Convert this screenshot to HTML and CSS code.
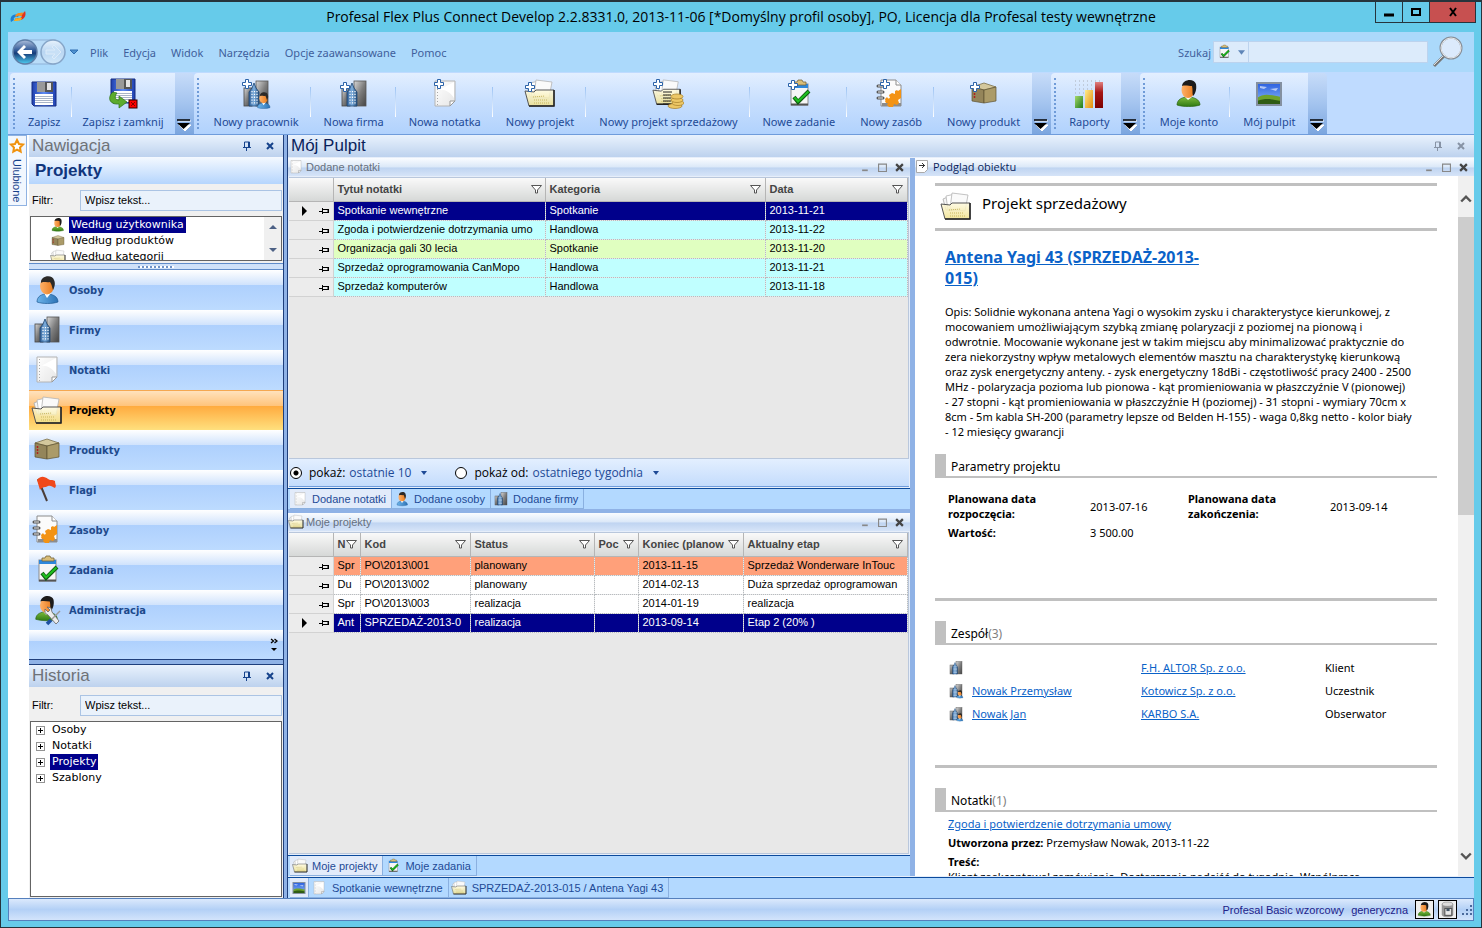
FILE: index.html
```html
<!DOCTYPE html>
<html lang="pl">
<head>
    <meta charset="UTF-8">
    <meta name="viewport" content="width=device-width, initial-scale=1.0">
    <title>Profesal Flex Plus Connect</title>
    <link rel="stylesheet" href="styles.css">
</head>
<body>
    <!-- Icons -->
    <svg class="sprite" width="0" height="0" aria-hidden="true">
        <defs>
            <linearGradient id="g-steel" x1="0" y1="0" x2="1" y2="1"><stop offset="0" stop-color="#d8d8d8"/><stop offset="0.5" stop-color="#7d7d7d"/><stop offset="1" stop-color="#444"/></linearGradient>
            <linearGradient id="g-tower" x1="0" y1="0" x2="1" y2="0"><stop offset="0" stop-color="#2f5f96"/><stop offset="0.5" stop-color="#7fb0e0"/><stop offset="1" stop-color="#24507f"/></linearGradient>
            <linearGradient id="g-paper" x1="0" y1="0" x2="1" y2="1"><stop offset="0" stop-color="#fff"/><stop offset="1" stop-color="#e6e6e6"/></linearGradient>
            <linearGradient id="g-folder" x1="0" y1="0" x2="0" y2="1"><stop offset="0" stop-color="#fffbe0"/><stop offset="1" stop-color="#efe08a"/></linearGradient>
            <linearGradient id="g-disk" x1="0" y1="0" x2="1" y2="0"><stop offset="0" stop-color="#1f3fae"/><stop offset="0.5" stop-color="#5f8cf4"/><stop offset="1" stop-color="#1f3fae"/></linearGradient>
            <linearGradient id="g-skin" x1="0" y1="0" x2="1" y2="0"><stop offset="0" stop-color="#ffb168"/><stop offset="1" stop-color="#e87a1c"/></linearGradient>
            <linearGradient id="g-green" x1="0" y1="0" x2="0" y2="1"><stop offset="0" stop-color="#7dbb3c"/><stop offset="1" stop-color="#2f7a14"/></linearGradient>
            <linearGradient id="g-blue" x1="0" y1="0" x2="1" y2="0"><stop offset="0" stop-color="#6db4ea"/><stop offset="1" stop-color="#2c73b6"/></linearGradient>
            <linearGradient id="g-orb" x1="0" y1="0" x2="0" y2="1"><stop offset="0" stop-color="#aebfdc"/><stop offset="0.45" stop-color="#2b5594"/><stop offset="0.55" stop-color="#163c79"/><stop offset="1" stop-color="#4fd0f4"/></linearGradient>
            <linearGradient id="g-orb-off" x1="0" y1="0" x2="0" y2="1"><stop offset="0" stop-color="#e8f2fc"/><stop offset="0.5" stop-color="#b9d6f2"/><stop offset="1" stop-color="#d3e9fa"/></linearGradient>
            <linearGradient id="g-sky" x1="0" y1="0" x2="0" y2="1"><stop offset="0" stop-color="#2a5fe0"/><stop offset="1" stop-color="#8fbcf6"/></linearGradient>
            <linearGradient id="g-bar1" x1="0" y1="0" x2="1" y2="1"><stop offset="0" stop-color="#a5d86a"/><stop offset="1" stop-color="#1d7a1d"/></linearGradient>
            <linearGradient id="g-bar2" x1="0" y1="0" x2="1" y2="1"><stop offset="0" stop-color="#ffec8c"/><stop offset="1" stop-color="#e38c0c"/></linearGradient>
            <linearGradient id="g-bar3" x1="0" y1="0" x2="0" y2="1"><stop offset="0" stop-color="#e08080"/><stop offset="0.4" stop-color="#a51616"/><stop offset="1" stop-color="#7c0000"/></linearGradient>
        </defs>
        <symbol id="i-logo" viewBox="0 0 16 12">
            <path d="M1 11C-1 5 4 2 9 4L8 6C5 5 3 7 4 9z" fill="#1d7fd4"/>
            <path d="M5 5C8 0 12 3 14 1L12 5C10 5 8 4 6 6z" fill="#f58a1f"/>
            <path d="M15 0C17 5 13 10 8 9L4 10L6 7C9 8 12 7 12 4z" fill="#e2321f"/>
            <path d="M4 10L6 7C8 8 10 7 11 6L12 8C10 10 7 10 4 10z" fill="#f7b021"/>
        </symbol>
        <symbol id="i-disk" viewBox="0 0 32 32">
            <path d="M4 4h24v24H6l-2-2z" fill="url(#g-disk)" stroke="#162c80"/>
            <rect x="9" y="4" width="16" height="10" fill="#555"/>
            <rect x="9" y="4" width="8" height="10" fill="#999"/>
            <rect x="19" y="5" width="4" height="7" fill="#e4e4e4"/>
            <rect x="7" y="16" width="18" height="11" fill="#fff"/>
            <path d="M7 18.500h18M7 20.500h18M7 22.500h18M7 24.500h18" stroke="#a8b4c8"/>
        </symbol>
        <symbol id="i-disk-exit" viewBox="0 0 32 32">
            <use href="#i-disk" x="0" y="-3" width="32" height="32"/>
            <path d="M6 14C0 19 2 27 12 26v4l8-6-8-6v4C8 22 7 19 10 15z" fill="#5cab2d" stroke="#2e7412" stroke-width="0.700"/>
            <rect x="22" y="22" width="8" height="8" fill="#f00" stroke="#300"/>
            <path d="M24 24l4 4M28 24l-4 4" stroke="#800"/>
        </symbol>
        <symbol id="i-firm" viewBox="0 0 32 32">
            <rect x="16" y="3" width="12" height="25" fill="url(#g-steel)" stroke="#555" stroke-width="0.800"/>
            <rect x="4" y="10" width="8" height="18" fill="url(#g-steel)" stroke="#444" stroke-width="0.800"/>
            <path d="M9 28V14l3-4 2-5 2 5 3 4v14z" fill="url(#g-tower)" stroke="#1e446e" stroke-width="0.800"/>
            <path d="M12 13v13M14.500 13v13M17 13v13" stroke="#fff" stroke-width="1.200" stroke-dasharray="1.300 1.500"/>
        </symbol>
        <symbol id="i-person" viewBox="0 0 32 32">
            <path d="M6 28c0-6 5-8 10-8s11 2 11 8c-6 2-15 2-21 0z" fill="url(#g-blue)" stroke="#1f5a94" stroke-width="0.700"/>
            <path d="M13 19l3 5 4-5z" fill="#fff"/>
            <ellipse cx="16" cy="12" rx="7" ry="8.500" fill="url(#g-skin)"/>
            <path d="M10 9C9 1 22 0 23 6c2 4 0 8-1 10-1-3-1-5-3-8-3 1-7-1-9 1z" fill="#2c2a28"/>
        </symbol>
        <symbol id="i-user" viewBox="0 0 32 32">
            <path d="M4 27c0-6 6-8 11-8s12 2 12 8c-6 2-17 2-23 0z" fill="url(#g-green)" stroke="#2b6412" stroke-width="0.700"/>
            <path d="M12 19l3 3 4-3z" fill="#fff"/>
            <ellipse cx="15" cy="12" rx="6.500" ry="8" fill="url(#g-skin)"/>
            <path d="M9 8C10 1 21 0 23 6c1 6-1 10-3 12-1-3 0-6-1-10-3 0-7-1-10 0z" fill="#1c1b1b"/>
        </symbol>
        <symbol id="i-firm-person" viewBox="0 0 32 32">
            <use href="#i-firm" width="32" height="32"/>
            <use href="#i-person" x="14" y="13" width="19" height="19"/>
        </symbol>
        <symbol id="i-note" viewBox="0 0 32 32">
            <path d="M6 3h20v20l-5 5H6z" fill="url(#g-paper)" stroke="#b4b4b4"/>
            <path d="M8.500 5v22" stroke="#aaa" stroke-dasharray="1 2"/>
            <path d="M10 12c6-1 11 2 15 8V4z" fill="#fff"/>
            <path d="M21 28v-5h5z" fill="#fff" stroke="#999"/>
        </symbol>
        <symbol id="i-folder" viewBox="0 0 32 32">
            <path d="M3 8l7-3 3 14H6z" fill="#f4f4f4" stroke="#aaa" stroke-width="0.800"/>
            <path d="M6 5l9-2 2 16H8z" fill="#fff" stroke="#b4b4b4" stroke-width="0.800"/>
            <path d="M12 2l16 2-3 16-15-2z" fill="#fafafa" stroke="#b4b4b4" stroke-width="0.800"/>
            <path d="M1 13l9 1 2-2h18v16H5z" fill="url(#g-folder)" fill-opacity="0.850" stroke="#555"/>
            <path d="M9 19l12-1M10 22h13M10 25h15" stroke="#c9b760" stroke-dasharray="1 1"/>
            <path d="M30 12v16H5" fill="none" stroke="#222" stroke-width="1.500"/>
        </symbol>
        <symbol id="i-folder-coins" viewBox="0 0 32 32">
            <use href="#i-folder" width="30" height="30"/>
            <path d="M11 14h9M11 17h8M11 20h8M11 23h8M11 26h8" stroke="#222"/>
            <g fill="#ecc766" stroke="#a57c28" stroke-width="0.700">
                <ellipse cx="23" cy="28" rx="7" ry="2.500"/><ellipse cx="26" cy="25" rx="6" ry="2.500"/><ellipse cx="25" cy="22" rx="6" ry="2.500"/><ellipse cx="25" cy="18.500" rx="6" ry="2.500"/>
            </g>
        </symbol>
        <symbol id="i-task" viewBox="0 0 32 32">
            <rect x="8" y="6" width="17" height="21" fill="#f6f6f6" stroke="#8c8c8c"/>
            <rect x="8" y="6" width="17" height="4" fill="#2d87dc"/>
            <path d="M11 7V4h3l1-2h4l1 2h3v3z" fill="#d8bd78" stroke="#77643a" stroke-width="0.800"/>
            <path d="M8 26.500h17" stroke="#555" stroke-width="2"/>
            <path d="M11 19l4 5L26 13" fill="none" stroke="#115c11" stroke-width="4"/>
            <path d="M11.500 19.500l3.500 4L25.500 13.500" fill="none" stroke="#1fc01f" stroke-width="2.200"/>
        </symbol>
        <symbol id="i-resource" viewBox="0 0 32 32">
            <path d="M6 2h15l5 5v21H6z" fill="#fbfbfb" stroke="#8c8c8c"/>
            <path d="M21 2v5h5" fill="#fff" stroke="#8c8c8c"/>
            <path d="M7 26.500h19" stroke="#8c8c8c" stroke-width="3"/>
            <path d="M26 11l-3 2-1-1-2 1v3l-3-1-3 2 1 3-3 1-2 3 3 1-1 2 2 2h4l1-3 3 1 2-2-1-3 3-2z" fill="#f39314"/>
            <path d="M10 21l2-2 2 3-1 3h-2z" fill="#f39314"/>
            <path d="M3 8h5M3 14h5M3 20h5" stroke="#555" stroke-width="3" stroke-linecap="round"/>
            <path d="M3 8h5M3 14h5M3 20h5" stroke="#eee" stroke-width="1.200"/>
        </symbol>
        <symbol id="i-box" viewBox="0 0 32 32">
            <path d="M4 9l12-4 12 4-12 3z" fill="#d3c79c" stroke="#6e6239" stroke-width="0.700"/>
            <path d="M4 9l12 3v13L4 23z" fill="#94855a" stroke="#5d5230" stroke-width="0.700"/>
            <path d="M28 9l-12 3v13l12-2z" fill="#ab9b69" stroke="#5d5230" stroke-width="0.700"/>
            <path d="M6.500 12v9" stroke="#b02020" stroke-width="1.500" stroke-dasharray="2 1"/>
        </symbol>
        <symbol id="i-flag" viewBox="0 0 32 32">
            <path d="M7 5l9 22" stroke="#4a3d38" stroke-width="2"/>
            <path d="M6 6c4-5 8-3 11-1s4 0 7 2c0 4 2 4 0 7-3-1-4-3-7-2-3 2-5 0-8 4z" fill="#f0481a"/>
        </symbol>
        <symbol id="i-admin" viewBox="0 0 32 32">
            <use href="#i-user" x="0" y="0" width="32" height="30"/>
            <path d="M16 13l4 1 1 4 7 9-3 3-8-9-3-2v-4l3 3 2-2z" fill="#ececec" stroke="#666" stroke-width="0.800"/>
            <path d="M29 17l-8 8" stroke="#999" stroke-width="1.500"/>
            <path d="M20 26l-4 4" stroke="#1d50a0" stroke-width="3.500"/>
        </symbol>
        <symbol id="i-chart" viewBox="0 0 32 32">
            <path d="M2 3h26M2 7h26M2 11h26M2 15h26" stroke="#a9aeb8" stroke-dasharray="1 3"/>
            <rect x="2" y="18" width="8" height="12" fill="url(#g-bar1)"/>
            <rect x="12" y="12" width="8" height="18" fill="url(#g-bar2)"/>
            <rect x="22" y="4" width="8" height="26" fill="url(#g-bar3)"/>
        </symbol>
        <symbol id="i-desktop" viewBox="0 0 32 32">
            <rect x="4" y="5" width="24" height="22" fill="url(#g-sky)"/>
            <path d="M7 8l7 1-3 2-4-1zM17 11l8-1-2 3z" fill="#fff" opacity="0.600"/>
            <path d="M4 20c7-5 13-3 24-1v8H4z" fill="#6fa32c"/>
            <path d="M4 23c9-3 14-2 24 0v4H4z" fill="#2f5c14"/>
            <rect x="4" y="5" width="24" height="22" fill="none" stroke="#8490a0" stroke-width="2"/>
        </symbol>
        <symbol id="i-plus" viewBox="0 0 10 10">
            <path d="M3.500.5h3v3h3v3h-3v3h-3v-3h-3v-3h3z" fill="#fff" stroke="#2b62a8"/>
        </symbol>
        <symbol id="i-lens" viewBox="0 0 32 32">
            <path d="M2 30l11-11" stroke="#777" stroke-width="3"/>
            <path d="M2 29l11-11" stroke="#ddd"/>
            <circle cx="19" cy="12" r="10.500" fill="#dceafc" stroke="#868e98" stroke-width="2"/>
            <circle cx="19" cy="12" r="10" fill="none" stroke="#e8e8e8"/>
        </symbol>
        <symbol id="i-star" viewBox="0 0 16 16">
            <path d="M8 2l2 4 4 .5-3 3 .7 4.200L8 11.700l-3.700 2L5 9.500l-3-3L6 6z" fill="#fff" stroke="#f0920e" stroke-width="2"/>
        </symbol>
        <symbol id="i-pin" viewBox="0 0 8 10">
            <path d="M1.500 1h5v5M5.500 1v5M1.500 1v5M0 6.500h8M3.500 6v4" fill="none" stroke="currentColor"/>
        </symbol>
        <symbol id="i-rowpin" viewBox="0 0 10 6">
            <path d="M0 3.500h4M3.500 0v6M4 1.500h5v3M4 4.500h6M9.500 1v4" fill="none" stroke="#000"/>
        </symbol>
        <symbol id="i-close" viewBox="0 0 8 8">
            <path d="M1 1l6 6M7 1L1 7" stroke="currentColor" stroke-width="2"/>
        </symbol>
        <symbol id="i-min" viewBox="0 0 8 8"><path d="M1 6.500h5" stroke="currentColor" stroke-width="1.500"/></symbol>
        <symbol id="i-max" viewBox="0 0 8 8"><path d="M0 1h8M.5 1v7M7.500 1v7M0 7.500h8" fill="none" stroke="currentColor"/></symbol>
        <symbol id="i-filter" viewBox="0 0 11 9">
            <path d="M.5.5h10L6.500 5v3h-2V5z" fill="#fff" stroke="#555"/>
        </symbol>
        <symbol id="i-overflow" viewBox="0 0 14 12">
            <path d="M1 2h13M2 6h12L8 12z" fill="#fff" stroke="#fff"/>
            <path d="M0 1h13" stroke="#000" stroke-width="1.500"/>
            <path d="M0 4h13l-6.500 6z"/>
        </symbol>
        <symbol id="i-db" viewBox="0 0 32 32">
            <path d="M6 6v20c0 5 20 5 20 0V6z" fill="#999" stroke="#777"/>
            <ellipse cx="16" cy="6" rx="10" ry="4" fill="#ddd" stroke="#777"/>
            <rect x="11" y="14" width="13" height="13" fill="#e8e8e8" stroke="#555" stroke-width="2"/>
            <rect x="14" y="14" width="6" height="5" fill="#456"/>
        </symbol>
    </svg>

    <div class="window">
        <header class="titlebar">
            <svg class="logo"><use href="#i-logo"/></svg>
            <h1>Profesal Flex Plus Connect Develop 2.2.8331.0, 2013-11-06 [*Domyślny profil osoby], PO, Licencja dla Profesal testy wewnętrzne</h1>
            <div class="window-buttons">
                <button type="button" aria-label="Minimalizuj"><svg viewBox="0 0 12 10"><path d="M1 8h10" stroke="#000" stroke-width="3"/></svg></button>
                <button type="button" aria-label="Maksymalizuj"><svg viewBox="0 0 12 10"><path d="M2 2h8v6H2z" fill="none" stroke="#000" stroke-width="2"/></svg></button>
                <button type="button" class="close" aria-label="Zamknij"><svg viewBox="0 0 12 10"><path d="M3 1l6 8M9 1L3 9" stroke="#000" stroke-width="2"/></svg></button>
            </div>
        </header>

        <div class="menubar">
            <svg class="history-orbs" viewBox="0 0 56 28">
                <rect x="12" y="2" width="32" height="24" fill="#b9dcf8" stroke="#8fb2d8"/>
                <circle cx="14" cy="14" r="12" fill="url(#g-orb)" stroke="#5f7fa8" stroke-width="1.500"/>
                <path d="M6 14l7-7 2 2-3 3h9v4h-9l3 3-2 2z" fill="#fff"/>
                <circle cx="42" cy="14" r="12" fill="url(#g-orb-off)" stroke="#86a5c8" stroke-width="1.500"/>
                <path d="M50 14l-7-7-2 2 3 3h-9v4h9l-3 3 2 2z" fill="#c8e0f6" stroke="#dcebf9"/>
            </svg>
            <svg class="history-arrow" viewBox="0 0 10 6"><path d="M1 1h8L5 5z" fill="#4f93cf" stroke="#2e6db0"/></svg>
            <nav class="menu">
                <a href="#">Plik</a>
                <a href="#">Edycja</a>
                <a href="#">Widok</a>
                <a href="#">Narzędzia</a>
                <a href="#">Opcje zaawansowane</a>
                <a href="#">Pomoc</a>
            </nav>
            <form class="search">
                <label for="search">Szukaj</label>
                <button type="button" class="search-type" aria-label="Rodzaj obiektu">
                    <svg class="icon16"><use href="#i-task"/></svg>
                    <svg class="search-arrow" viewBox="0 0 8 5"><path d="M0 0h8L4 5z" fill="#5f86b8"/></svg>
                </button>
                <input type="text" id="search">
                <button type="button" class="search-go" aria-label="Szukaj teraz"><svg><use href="#i-lens"/></svg></button>
            </form>
        </div>

        <div class="toolbar">
            <div class="tool-group">
                <button type="button"><svg class="icon32"><use href="#i-disk"/></svg>Zapisz</button>
                <button type="button"><svg class="icon32"><use href="#i-disk-exit"/></svg>Zapisz i zamknij</button>
            </div>
            <button type="button" class="overflow" aria-label="Więcej"><svg><use href="#i-overflow"/></svg></button>
            <div class="tool-group roomy">
                <button type="button"><svg class="icon32"><use href="#i-firm-person"/><use href="#i-plus" x="2" y="1" width="10" height="10"/></svg>Nowy pracownik</button>
                <button type="button"><svg class="icon32"><use href="#i-firm"/><use href="#i-plus" x="2" y="4" width="10" height="10"/></svg>Nowa firma</button>
                <button type="button"><svg class="icon32"><use href="#i-note"/><use href="#i-plus" x="5" y="1" width="10" height="10"/></svg>Nowa notatka</button>
                <button type="button"><svg class="icon32"><use href="#i-folder"/><use href="#i-plus" x="1" y="4" width="10" height="10"/></svg>Nowy projekt</button>
                <button type="button"><svg class="icon32"><use href="#i-folder-coins"/><use href="#i-plus" x="1" y="1" width="10" height="10"/></svg>Nowy projekt sprzedażowy</button>
                <button type="button"><svg class="icon32"><use href="#i-task"/><use href="#i-plus" x="5" y="2" width="10" height="10"/></svg>Nowe zadanie</button>
                <button type="button"><svg class="icon32"><use href="#i-resource"/><use href="#i-plus" x="5" y="1" width="10" height="10"/></svg>Nowy zasób</button>
                <button type="button"><svg class="icon32"><use href="#i-box"/><use href="#i-plus" x="2" y="4" width="10" height="10"/></svg>Nowy produkt</button>
            </div>
            <button type="button" class="overflow" aria-label="Więcej"><svg><use href="#i-overflow"/></svg></button>
            <div class="tool-group">
                <button type="button"><svg class="icon32"><use href="#i-chart"/></svg>Raporty</button>
            </div>
            <button type="button" class="overflow" aria-label="Więcej"><svg><use href="#i-overflow"/></svg></button>
            <div class="tool-group roomy">
                <button type="button"><svg class="icon32"><use href="#i-user"/></svg>Moje konto</button>
                <button type="button"><svg class="icon32"><use href="#i-desktop"/></svg>Mój pulpit</button>
            </div>
            <button type="button" class="overflow" aria-label="Więcej"><svg><use href="#i-overflow"/></svg></button>
        </div>

        <main class="workspace">
            <div class="autohide">
                <button type="button"><svg class="icon16"><use href="#i-star"/></svg>Ulubione</button>
            </div>

            <aside class="dock">
                <section class="navigation">
                    <div class="dock-header">
                        <h2>Nawigacja</h2>
                        <svg class="pin"><use href="#i-pin"/></svg>
                        <svg class="cross"><use href="#i-close"/></svg>
                    </div>
                    <h3 class="dock-title">Projekty</h3>
                    <div class="filter">
                        <label for="nav-filter">Filtr:</label>
                        <input type="text" id="nav-filter" value="Wpisz tekst...">
                    </div>
                    <div class="nav-tree">
                        <ul>
                            <li><svg class="icon16"><use href="#i-user"/></svg><span class="selected">Według użytkownika</span></li>
                            <li><svg class="icon16"><use href="#i-box"/></svg><span>Według produktów</span></li>
                            <li><svg class="icon16"><use href="#i-folder"/></svg><span>Według kategorii</span></li>
                        </ul>
                        <div class="tree-scroll">
                            <svg viewBox="0 0 8 4"><path d="M0 4h8L4 0z" fill="#4d6185"/></svg>
                            <svg viewBox="0 0 8 4"><path d="M0 0h8L4 4z" fill="#4d6185"/></svg>
                        </div>
                    </div>
                    <div class="nav-grip"></div>
                    <nav class="nav-buttons">
                        <button type="button"><svg class="icon32"><use href="#i-person"/></svg>Osoby</button>
                        <button type="button"><svg class="icon32"><use href="#i-firm"/></svg>Firmy</button>
                        <button type="button"><svg class="icon32"><use href="#i-note"/></svg>Notatki</button>
                        <button type="button" class="active"><svg class="icon32"><use href="#i-folder"/></svg>Projekty</button>
                        <button type="button"><svg class="icon32"><use href="#i-box"/></svg>Produkty</button>
                        <button type="button"><svg class="icon32"><use href="#i-flag"/></svg>Flagi</button>
                        <button type="button"><svg class="icon32"><use href="#i-resource"/></svg>Zasoby</button>
                        <button type="button"><svg class="icon32"><use href="#i-task"/></svg>Zadania</button>
                        <button type="button"><svg class="icon32"><use href="#i-admin"/></svg>Administracja</button>
                    </nav>
                    <div class="nav-footer">
                        <svg viewBox="0 0 8 14"><path d="M1 1l2.500 2L1 5M4.500 1L7 3 4.500 5" fill="none" stroke="#000" stroke-width="1.300"/><path d="M1 10h6l-3 3z"/></svg>
                    </div>
                </section>

                <section class="history">
                    <div class="dock-header">
                        <h2>Historia</h2>
                        <svg class="pin"><use href="#i-pin"/></svg>
                        <svg class="cross"><use href="#i-close"/></svg>
                    </div>
                    <div class="filter">
                        <label for="history-filter">Filtr:</label>
                        <input type="text" id="history-filter" value="Wpisz tekst...">
                    </div>
                    <ul class="history-tree">
                        <li><i></i><span>Osoby</span></li>
                        <li><i></i><span>Notatki</span></li>
                        <li><i></i><span class="selected">Projekty</span></li>
                        <li><i></i><span>Szablony</span></li>
                    </ul>
                </section>
            </aside>

            <section class="desktop">
                <div class="desktop-header">
                    <h2>Mój Pulpit</h2>
                    <svg class="pin"><use href="#i-pin"/></svg>
                    <svg class="cross"><use href="#i-close"/></svg>
                </div>

                <div class="panes">
                    <div class="lists">
                        <section class="pane notes">
                            <div class="pane-header">
                                <svg class="icon16"><use href="#i-note"/></svg>
                                <h3>Dodane notatki</h3>
                                <svg class="ctl"><use href="#i-min"/></svg>
                                <svg class="ctl"><use href="#i-max"/></svg>
                                <svg class="ctl dark"><use href="#i-close"/></svg>
                            </div>
                            <div class="grid">
                                <table>
                                    <colgroup><col class="c-mark"><col class="c-title"><col class="c-cat"><col></colgroup>
                                    <thead>
                                        <tr>
                                            <th></th>
                                            <th>Tytuł notatki<svg><use href="#i-filter"/></svg></th>
                                            <th>Kategoria<svg><use href="#i-filter"/></svg></th>
                                            <th>Data<svg><use href="#i-filter"/></svg></th>
                                        </tr>
                                    </thead>
                                    <tbody>
                                        <tr class="current"><td><b></b><svg><use href="#i-rowpin"/></svg></td><td>Spotkanie wewnętrzne</td><td>Spotkanie</td><td>2013-11-21</td></tr>
                                        <tr class="cyan"><td><svg><use href="#i-rowpin"/></svg></td><td>Zgoda i potwierdzenie dotrzymania umo</td><td>Handlowa</td><td>2013-11-22</td></tr>
                                        <tr class="lime"><td><svg><use href="#i-rowpin"/></svg></td><td>Organizacja gali 30 lecia</td><td>Spotkanie</td><td>2013-11-20</td></tr>
                                        <tr class="cyan"><td><svg><use href="#i-rowpin"/></svg></td><td>Sprzedaż oprogramowania CanMopo</td><td>Handlowa</td><td>2013-11-21</td></tr>
                                        <tr class="cyan"><td><svg><use href="#i-rowpin"/></svg></td><td>Sprzedaż komputerów</td><td>Handlowa</td><td>2013-11-18</td></tr>
                                    </tbody>
                                </table>
                            </div>
                            <div class="range">
                                <input type="radio" name="range" id="range-last" checked>
                                <label for="range-last">pokaż:</label>
                                <button type="button">ostatnie 10<svg viewBox="0 0 6 4"><path d="M0 0h6L3 4z" fill="#1e4a96"/></svg></button>
                                <input type="radio" name="range" id="range-from">
                                <label for="range-from">pokaż od:</label>
                                <button type="button">ostatniego tygodnia<svg viewBox="0 0 6 4"><path d="M0 0h6L3 4z" fill="#1e4a96"/></svg></button>
                            </div>
                            <div class="tabs">
                                <button type="button" class="active"><svg class="icon16"><use href="#i-note"/></svg>Dodane notatki</button>
                                <button type="button"><svg class="icon16"><use href="#i-person"/></svg>Dodane osoby</button>
                                <button type="button"><svg class="icon16"><use href="#i-firm"/></svg>Dodane firmy</button>
                            </div>
                        </section>

                        <section class="pane projects">
                            <div class="pane-header">
                                <svg class="icon16"><use href="#i-folder"/></svg>
                                <h3>Moje projekty</h3>
                                <svg class="ctl"><use href="#i-min"/></svg>
                                <svg class="ctl"><use href="#i-max"/></svg>
                                <svg class="ctl dark"><use href="#i-close"/></svg>
                            </div>
                            <div class="grid">
                                <table>
                                    <colgroup><col class="c-mark"><col class="c-name"><col class="c-code"><col class="c-status"><col class="c-start"><col class="c-end"><col></colgroup>
                                    <thead>
                                        <tr>
                                            <th></th>
                                            <th>N<svg><use href="#i-filter"/></svg></th>
                                            <th>Kod<svg><use href="#i-filter"/></svg></th>
                                            <th>Status<svg><use href="#i-filter"/></svg></th>
                                            <th>Poc<svg><use href="#i-filter"/></svg></th>
                                            <th>Koniec (planow<svg><use href="#i-filter"/></svg></th>
                                            <th>Aktualny etap<svg><use href="#i-filter"/></svg></th>
                                        </tr>
                                    </thead>
                                    <tbody>
                                        <tr class="salmon"><td><svg><use href="#i-rowpin"/></svg></td><td>Spr</td><td>PO\2013\001</td><td>planowany</td><td></td><td>2013-11-15</td><td>Sprzedaż Wonderware InTouc</td></tr>
                                        <tr><td><svg><use href="#i-rowpin"/></svg></td><td>Du</td><td>PO\2013\002</td><td>planowany</td><td></td><td>2014-02-13</td><td>Duża sprzedaż oprogramowan</td></tr>
                                        <tr><td><svg><use href="#i-rowpin"/></svg></td><td>Spr</td><td>PO\2013\003</td><td>realizacja</td><td></td><td>2014-01-19</td><td>realizacja</td></tr>
                                        <tr class="current"><td><b></b><svg><use href="#i-rowpin"/></svg></td><td>Ant</td><td>SPRZEDAŻ-2013-0</td><td>realizacja</td><td></td><td>2013-09-14</td><td>Etap 2 (20% )</td></tr>
                                    </tbody>
                                </table>
                            </div>
                            <div class="tabs">
                                <button type="button" class="active"><svg class="icon16"><use href="#i-folder"/></svg>Moje projekty</button>
                                <button type="button"><svg class="icon16"><use href="#i-task"/></svg>Moje zadania</button>
                            </div>
                        </section>
                    </div>

                    <section class="pane preview">
                        <div class="pane-header">
                            <svg class="icon16" viewBox="0 0 16 16"><path d="M1.500 1.500h11v9l-3 3h-8z" fill="#fff" stroke="#aaa"/><path d="M4 6.500h6M7 4l2.500 2.500L7 9" fill="none" stroke="#333"/></svg>
                            <h3>Podgląd obiektu</h3>
                            <svg class="ctl"><use href="#i-min"/></svg>
                            <svg class="ctl"><use href="#i-max"/></svg>
                            <svg class="ctl dark"><use href="#i-close"/></svg>
                        </div>
                        <div class="preview-body">
                            <article class="object">
                                <header class="object-type">
                                    <svg class="icon32"><use href="#i-folder"/></svg>
                                    <span>Projekt sprzedażowy</span>
                                </header>
                                <a href="#" class="object-name">Antena Yagi 43 (SPRZEDAŻ-2013-<br>015)</a>
                                <p class="description">Opis: Solidnie wykonana antena Yagi o wysokim zysku i charakterystyce kierunkowej, z<br>
                                    mocowaniem umożliwiającym szybką zmianę polaryzacji z poziomej na pionową i<br>
                                    odwrotnie. Mocowanie wykonane jest w takim miejscu aby minimalizować praktycznie do<br>
                                    zera niekorzystny wpływ metalowych elementów masztu na charakterystykę kierunkową<br>
                                    oraz zysk energetyczny anteny. - zysk energetyczny 18dBi - częstotliwość pracy 2400 - 2500<br>
                                    MHz - polaryzacja pozioma lub pionowa - kąt promieniowania w płaszczyźnie V (pionowej)<br>
                                    - 27 stopni - kąt promieniowania w płaszczyźnie H (poziomej) - 31 stopni - wymiary 70cm x<br>
                                    8cm - 5m kabla SH-200 (parametry lepsze od Belden H-155) - waga 0,8kg netto - kolor biały<br>
                                    - 12 miesięcy gwarancji</p>

                                <section class="block">
                                    <h4>Parametry projektu</h4>
                                    <dl class="params">
                                        <dt>Planowana data rozpoczęcia:</dt><dd>2013-07-16</dd>
                                        <dt>Planowana data zakończenia:</dt><dd>2013-09-14</dd>
                                        <dt>Wartość:</dt><dd>3 500.00</dd>
                                    </dl>
                                </section>

                                <section class="block">
                                    <h4>Zespół<small>(3)</small></h4>
                                    <table class="team">
                                        <colgroup><col class="t-icon"><col class="t-person"><col class="t-firm"><col></colgroup>
                                        <tr><td><svg class="icon16"><use href="#i-firm"/></svg></td><td></td><td><a href="#">F.H. ALTOR Sp. z o.o.</a></td><td>Klient</td></tr>
                                        <tr><td><svg class="icon16"><use href="#i-firm-person"/></svg></td><td><a href="#">Nowak Przemysław</a></td><td><a href="#">Kotowicz Sp. z o.o.</a></td><td>Uczestnik</td></tr>
                                        <tr><td><svg class="icon16"><use href="#i-firm-person"/></svg></td><td><a href="#">Nowak Jan</a></td><td><a href="#">KARBO S.A.</a></td><td>Obserwator</td></tr>
                                    </table>
                                </section>

                                <section class="block">
                                    <h4>Notatki<small>(1)</small></h4>
                                    <div class="note">
                                        <a href="#">Zgoda i potwierdzenie dotrzymania umowy</a>
                                        <p><strong>Utworzona przez:</strong> Przemysław Nowak, 2013-11-22</p>
                                        <p><strong>Treść:</strong></p>
                                        <p class="note-text">Klient zaakceptował zamówienie. Dostarczenie nadejść do tygodnia. Współpraca</p>
                                    </div>
                                </section>
                            </article>
                            <div class="scrollbar">
                                <svg viewBox="0 0 10 7"><path d="M1 6l4-4 4 4" fill="none" stroke="#555" stroke-width="2"/></svg>
                                <div class="track"><div class="thumb"></div></div>
                                <svg viewBox="0 0 10 7"><path d="M1 1l4 4 4-4" fill="none" stroke="#555" stroke-width="2"/></svg>
                            </div>
                        </div>
                    </section>
                </div>

                <div class="tabs window-tabs">
                    <button type="button" class="active" aria-label="Mój pulpit"><svg class="icon16"><use href="#i-desktop"/></svg></button>
                    <button type="button"><svg class="icon16"><use href="#i-note"/></svg>Spotkanie wewnętrzne</button>
                    <button type="button"><svg class="icon16"><use href="#i-folder"/></svg>SPRZEDAŻ-2013-015 / Antena Yagi 43</button>
                </div>
            </section>
        </main>

        <footer class="statusbar">
            <span>Profesal Basic wzorcowy</span>
            <span>generyczna</span>
            <svg class="status-icon"><use href="#i-user"/></svg>
            <svg class="status-icon"><use href="#i-db"/></svg>
            <svg class="size-grip" viewBox="0 0 12 12"><path d="M9 2h2M5 6h2M9 6h2M1 10h2M5 10h2M9 10h2" stroke="#4a6a9c" stroke-width="2"/></svg>
        </footer>
    </div>
</body>
</html>
```
FILE: styles.css
```css
* {
    margin: 0;
    padding: 0;
    box-sizing: border-box;
}

body {
    font-family: "Liberation Sans", Arial, sans-serif;
    font-size: 11px;
    color: #000;
    background-color: #66cbea;
}

button, input {
    font: inherit;
    color: inherit;
    border: none;
    background: none;
}

svg {
    display: block;
    flex: none;
}

h1, h2, h3, h4 {
    font-weight: normal;
}

ul {
    list-style: none;
}

.sprite {
    position: absolute;
}

.icon16 {
    width: 16px;
    height: 16px;
}

.icon32 {
    width: 32px;
    height: 32px;
}

.selected {
    background-color: #00008b;
    color: white;
}

/* Window frame */

.window {
    display: flex;
    flex-direction: column;
    height: 100vh;
    padding: 0 7px 6px;
    border: 1px solid #26343c;
    border-top-width: 2px;
    overflow: hidden;
}

.titlebar {
    display: grid;
    grid-template-columns: 1fr auto 1fr;
    align-items: center;
    height: 30px;
    flex: none;
}

.titlebar h1 {
    font-family: "Open Sans", sans-serif;
    font-size: 14px;
    line-height: 20px;
    white-space: nowrap;
}

.logo {
    width: 16px;
    height: 12px;
    margin-left: 2px;
}

.window-buttons {
    display: flex;
    justify-self: end;
    align-self: start;
    margin-right: -2px;
}

.window-buttons button {
    display: grid;
    place-items: center;
    width: 27px;
    height: 21px;
    border: 1px solid #26343c;
    border-top: none;
    border-right: none;
}

.window-buttons svg {
    width: 12px;
    height: 10px;
}

.window-buttons .close {
    width: 47px;
    border-right: 1px solid #26343c;
    background-color: #c75050;
}

/* Menu */

.menubar {
    display: flex;
    align-items: center;
    height: 40px;
    flex: none;
    padding: 0 10px 0 3px;
    background-color: #abd9fb;
    font-family: "Noto Sans", "Open Sans", sans-serif;
    color: #3f5f9c;
}

.history-orbs {
    width: 56px;
    height: 28px;
}

.history-arrow {
    width: 10px;
    height: 6px;
    margin-left: 2px;
}

.menu {
    display: flex;
    gap: 15px;
    margin-left: 11px;
}

.menu a {
    color: inherit;
    text-decoration: none;
}

.search {
    display: flex;
    align-items: center;
    margin-left: auto;
}

.search-type {
    display: flex;
    align-items: center;
    gap: 6px;
    width: 36px;
    height: 22px;
    padding-left: 2px;
    margin-left: 2px;
    border: 1px solid #bcd3ee;
    background-color: #dcebfb;
}

.search-arrow {
    width: 7px;
    height: 5px;
}

.search input {
    width: 179px;
    height: 22px;
    border: 1px solid #bcd3ee;
    border-left: none;
    background-color: #dcebfb;
}

.search-go svg {
    width: 32px;
    height: 32px;
    margin-left: 4px;
}

/* Toolbar */

.toolbar {
    display: flex;
    height: 63px;
    flex: none;
    padding-left: 2px;
    background-color: #bfdbff;
    border-bottom: 1px solid #6f9cdb;
    font-family: "Noto Sans", "Open Sans", sans-serif;
    color: #1e4a96;
}

.tool-group {
    display: flex;
    margin-top: 1px;
    padding-left: 7px;
    background: linear-gradient(#e3efff, #c8dffe 45%, #b1d2fd);
    border-radius: 4px 0 0 0;
    position: relative;
}

/* dotted grip at the left edge */
.tool-group::before {
    content: "";
    position: absolute;
    left: 3px;
    top: 5px;
    bottom: 5px;
    border-left: 2px dotted #6f9bd8;
}

.tool-group button {
    display: flex;
    flex-direction: column;
    align-items: center;
    padding: 5px 11px 0;
    gap: 4px;
    white-space: nowrap;
    background: linear-gradient(#9cc3f4, white) no-repeat right 14px / 1px 30px;
}

.roomy button {
    padding: 5px 12px 0 13px;
}

.tool-group button:last-child {
    background: none;
}

.overflow {
    width: 19px;
    margin-top: 1px;
    padding: 43px 0 0 2px;
    background: linear-gradient(#c7dcf9, #a4c4ef 50%, #7ca6df);
    border-radius: 0 4px 0 0;
}

.overflow svg {
    width: 14px;
    height: 12px;
}

/* Workspace */

.workspace {
    display: flex;
    flex: 1;
    min-height: 0;
}

.autohide {
    width: 21px;
    flex: none;
    background-color: white;
}

.autohide button {
    writing-mode: vertical-rl;
    display: flex;
    align-items: center;
    gap: 5px;
    width: 19px;
    height: 71px;
    padding-top: 2px;
    border: 1px solid #8fb2e2;
    border-left: none;
    background-color: #f2f7fe;
    color: #15428b;
}

.dock {
    display: flex;
    flex-direction: column;
    width: 259px;
    flex: none;
    border-right: 1px solid #1f3f7c;
    background-color: #f0f0f0;
    box-shadow: inset -3px 0 #8fb2e6, inset -4px 0 #1f3f7c;
}

.dock > section {
    margin-right: 4px;
}

.dock-header, .desktop-header {
    display: flex;
    align-items: center;
    height: 22px;
    padding: 0 9px 0 3px;
    background: linear-gradient(#e9f2fd, #bdd2ee);
    color: #15428b;
}

.dock-header h2, .desktop-header h2 {
    flex: 1;
    font-size: 17px;
    line-height: 20px;
}

.dock-header h2 {
    color: #6e7278;
}

.pin {
    width: 8px;
    height: 10px;
}

.cross {
    width: 8px;
    height: 8px;
    margin-left: 15px;
}

.dock-title {
    height: 27px;
    padding-left: 6px;
    line-height: 27px;
    font-size: 17px;
    font-weight: bold;
    color: #10357c;
    background: linear-gradient(#f4f9ff, #b5d5fd);
}

.filter {
    display: flex;
    align-items: center;
    height: 32px;
    padding: 0 1px 0 3px;
    background-color: #f0f0f0;
}

.filter label {
    width: 48px;
}

.filter input {
    flex: 1;
    min-width: 0;
    height: 21px;
    padding-left: 4px;
    border: 1px solid #abc4e4;
    background-color: #eaf2fb;
}

.nav-tree {
    display: flex;
    height: 45px;
    margin: 0 1px;
    border: 1px solid #646464;
    background-color: white;
    font-family: "DejaVu Sans", Verdana, sans-serif;
}

.nav-tree ul {
    flex: 1;
    overflow: hidden;
}

.nav-tree li {
    display: flex;
    gap: 3px;
    height: 16px;
    padding-left: 19px;
}

.nav-tree span, .history-tree span {
    height: 16px;
    line-height: 16px;
    padding: 0 2px;
}

.tree-scroll {
    display: flex;
    flex-direction: column;
    justify-content: space-between;
    align-items: center;
    width: 17px;
    padding: 8px 0;
    background-color: #f0f0f0;
}

.tree-scroll svg {
    width: 8px;
    height: 4px;
}

.nav-grip {
    height: 7px;
    margin-top: 2px;
    border: 1px solid #5f8cca;
    border-width: 1px 0;
    background: repeating-linear-gradient(90deg, #6f93c8 0 2px, white 2px 4px) no-repeat center / 36px 2px, #cfe1f9;
}

.nav-buttons button {
    display: flex;
    align-items: center;
    gap: 6px;
    width: 100%;
    height: 40px;
    padding: 0 2px;
    font-family: "DejaVu Sans Condensed", "DejaVu Sans", Tahoma, sans-serif;
    font-weight: bold;
    color: #1e4a8c;
    text-align: left;
    background: linear-gradient(white, #cfe2fc 38%, #aed0fd 38%, #bddbff);
}

.nav-buttons .active {
    color: black;
    background: linear-gradient(#ffe2bd, #ffc47c 38%, #ffaa3e 38%, #ffe07e);
    border-top: 1px solid #f5a851;
}

.nav-footer {
    display: flex;
    justify-content: flex-end;
    align-items: center;
    height: 29px;
    padding-right: 5px;
    background: linear-gradient(white, #cfe2fc 38%, #aed0fd 38%, #bddbff);
}

.nav-footer svg {
    width: 8px;
    height: 14px;
}

.history {
    display: flex;
    flex-direction: column;
    flex: 1;
    border-top: 1px solid #1f3f7c;
}

.history::before {
    content: "";
    height: 4px;
    border-bottom: 1px solid #1f3f7c;
    background-color: #8fb2e6;
}

.history .filter {
    margin-top: 2px;
}

.history-tree {
    flex: 1;
    margin: 0 1px 1px;
    border: 1px solid #646464;
    background-color: white;
    font-family: "DejaVu Sans", Verdana, sans-serif;
}

.history-tree li {
    display: flex;
    align-items: center;
    gap: 5px;
    height: 16px;
    padding-left: 5px;
}

/* expander box with a plus */
.history-tree i {
    width: 9px;
    height: 9px;
    border: 1px solid #949494;
    background: linear-gradient(black, black) no-repeat center / 5px 1px, linear-gradient(black, black) no-repeat center / 1px 5px;
}

.desktop {
    display: flex;
    flex-direction: column;
    flex: 1;
    min-width: 0;
    background-color: #e6eefa;
}

.desktop-header h2 {
    color: #0a1f5c;
}

.desktop-header {
    flex: none;
    color: #8793a5;
}

.panes {
    display: grid;
    grid-template-columns: 622fr 559fr;
    column-gap: 5px;
    flex: 1;
    min-height: 0;
    margin-top: 1px;
    background-color: #8fb2e6;
}

.lists {
    display: grid;
    grid-template-rows: 351fr 363fr;
    gap: 4px;
    min-height: 0;
    min-width: 0;
}

.pane {
    display: flex;
    flex-direction: column;
    min-height: 0;
    min-width: 0;
    background-color: #e6eefa;
}

.pane-header {
    display: flex;
    align-items: center;
    gap: 8px;
    height: 18px;
    flex: none;
    padding-right: 6px;
    background: linear-gradient(#fafcff, #dbe8f8 50%, #bfd4f1 55%, #d6e4f8);
    color: #66707e;
}

.pane-header h3 {
    flex: 1;
    margin-left: -6px;
    font-size: 11px;
    line-height: 16px;
    white-space: nowrap;
}

.ctl {
    width: 9px;
    height: 9px;
    color: #888;
}

.ctl.dark {
    color: #444;
}

/* Grids */

.grid {
    flex: 1;
    min-height: 0;
    margin: 1px 1px 0;
    border: 1px solid #b9c7dc;
    border-left: none;
    background-color: #e8e8e8;
    overflow: hidden;
}

.grid table {
    width: 100%;
    table-layout: fixed;
    border-collapse: collapse;
}

.c-mark { width: 44px; }
.c-title { width: 212px; }
.c-cat { width: 220px; }
.c-name { width: 27px; }
.c-code { width: 110px; }
.c-status { width: 124px; }
.c-start { width: 44px; }
.c-end { width: 105px; }

.grid th {
    height: 23px;
    padding: 0 4px;
    border-right: 1px solid #b5b5b5;
    border-bottom: 1px solid #b5b5b5;
    background: linear-gradient(#f9f9f9, #d6d8d7);
    text-align: left;
    white-space: nowrap;
    color: #444;
}

.grid th svg {
    float: right;
    width: 11px;
    height: 9px;
    margin-top: 2px;
}

.grid th:nth-child(2) {
    padding-right: 3px;
}

.grid td {
    height: 19px;
    padding: 0 4px 1px;
    border: 1px dotted #b8bcc0;
    background-color: white;
    overflow: hidden;
    white-space: nowrap;
}

.grid td:first-child {
    padding-bottom: 0;
    border: 1px solid #d2d2d2;
    border-left: none;
    background-color: #ececec;
}

.grid td svg {
    float: right;
    width: 10px;
    height: 6px;
    margin-top: 2px;
}

/* current row marker */
.grid td b {
    float: left;
    margin-left: 9px;
    border: 5px solid transparent;
    border-left-color: black;
    border-right: none;
}

.cyan td { background-color: #c0ffff; }
.lime td { background-color: #e0ffc0; }
.salmon td { background-color: #ffa07a; }

.current td {
    background-color: #00008b;
    color: white;
}

.range {
    display: flex;
    align-items: center;
    height: 28px;
    flex: none;
    margin: 0 1px;
    padding-left: 1px;
    background: linear-gradient(#e3efff, #c4dcfc);
    border-bottom: 1px solid #6f9cdb;
    font-family: "Open Sans", sans-serif;
    font-size: 12px;
}

.range input {
    appearance: none;
    width: 12px;
    height: 12px;
    border: 1px solid black;
    border-radius: 50%;
    background-color: white;
}

.range input:checked {
    background: radial-gradient(black 2px, white 3px);
}

.range label {
    margin-left: 7px;
}

.range button {
    display: flex;
    align-items: center;
    gap: 10px;
    margin: 0 28px 0 4px;
    color: #1e4a96;
}

.range button svg {
    width: 6px;
    height: 4px;
}

.tabs {
    display: flex;
    height: 21px;
    flex: none;
    margin-top: 1px;
    padding-left: 2px;
    border-top: 1px solid #0b4a9c;
    background-color: #b3d9ff;
    color: #1e4a96;
}

.tabs button {
    display: flex;
    align-items: center;
    gap: 4px;
    padding: 0 5px 0 2px;
    border: 1px solid #8ab0e0;
    border-top: none;
    border-left: none;
    white-space: nowrap;
}

.tabs .active {
    background-color: #e2ebfa;
}

.window-tabs button {
    gap: 5px;
}

.window-tabs .active {
    padding: 0 1px;
}

/* Preview */

.preview .pane-header {
    color: #0a1f5c;
}

.preview h3 {
    font-family: "Open Sans", sans-serif;
}

.preview-body {
    display: flex;
    flex: 1;
    min-height: 0;
    background-color: white;
}

.object {
    flex: 1;
    min-width: 0;
    padding: 7px 21px 0 20px;
    overflow: hidden;
    font-family: "Noto Sans", "Open Sans", sans-serif;
    line-height: 15px;
    white-space: nowrap;
}

.object a {
    color: #0a62c8;
}

.object-type {
    display: flex;
    align-items: center;
    gap: 10px;
    height: 48px;
    padding-left: 5px;
    border: 3px solid #c0c0c0;
    border-width: 3px 0;
    font-size: 15px;
}

.object-type span {
    padding-bottom: 8px;
}

.object-name {
    display: block;
    margin: 16px 0 0 10px;
    font-size: 16px;
    font-weight: bold;
    line-height: 21px;
}

.description {
    margin: 15px 0 15px 10px;
}

.block {
    height: 147px;
    margin-bottom: 20px;
    border-bottom: 3px solid #c0c0c0;
}

.block h4 {
    height: 24px;
    padding-left: 5px;
    border-left: 11px solid #c0c0c0;
    border-bottom: 2px solid #c0c0c0;
    font-size: 12px;
    line-height: 26px;
}

.block small {
    font-size: 12px;
    color: #808080;
}

.params {
    display: grid;
    grid-template-columns: 132px 88px 132px 1fr;
    align-items: center;
    column-gap: 10px;
    row-gap: 4px;
    padding: 13px 0 0 13px;
}

.params dt {
    font-weight: bold;
    white-space: normal;
}

.team {
    width: 100%;
    table-layout: fixed;
    border-collapse: collapse;
    margin: 11px 0 0 13px;
}

.team td {
    height: 23px;
}

.t-icon { width: 24px; }
.t-person { width: 169px; }
.t-firm { width: 184px; }

.note {
    padding: 4px 0 0 13px;
}

.note p {
    margin-top: 4px;
}

.note .note-text {
    margin-top: 0;
}

.scrollbar {
    display: flex;
    flex-direction: column;
    align-items: center;
    width: 16px;
    padding: 18px 0 15px;
    background-color: #f0f0f0;
}

.scrollbar svg {
    width: 12px;
    height: 9px;
}

.track {
    flex: 1;
    align-self: stretch;
    margin: 14px 0;
}

.thumb {
    height: 48%;
    background-color: #cdcdcd;
}

/* Status bar */

.statusbar {
    display: flex;
    align-items: center;
    gap: 4px;
    height: 23px;
    flex: none;
    border: 1px solid #5580bd;
    background: linear-gradient(#dbe9fc, #b3d0f6 50%, #d3e4fb);
    justify-content: flex-end;
    color: #22228a;
}

.statusbar span {
    margin-right: 3px;
}

.status-icon {
    width: 19px;
    height: 19px;
    border: 1px solid black;
    background-color: #eee;
}

.size-grip {
    width: 12px;
    height: 12px;
}
```
